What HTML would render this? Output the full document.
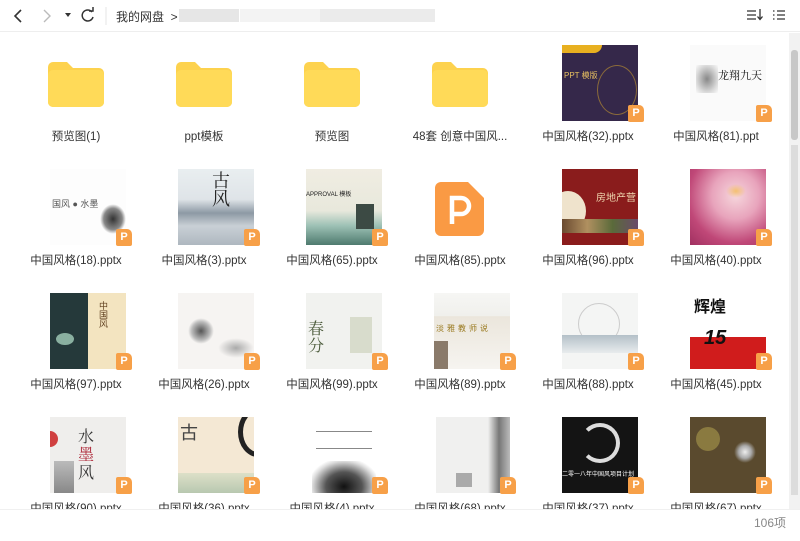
<!DOCTYPE html>
<html><head><meta charset="utf-8"><style>
*{margin:0;padding:0;box-sizing:border-box}
body{width:800px;height:533px;overflow:hidden;background:#fff;font-family:"Liberation Sans","Noto Sans CJK SC",sans-serif;color:#333;position:relative}
.top{position:absolute;left:0;top:0;width:800px;height:32px;border-bottom:1px solid #eee;background:#fff}
.cell{position:absolute;width:128px;height:124px}
.th{position:absolute;left:38px;top:0;width:76px;height:76px;overflow:hidden}
.bd{position:absolute;left:104px;top:60px;width:16px;height:17px;background:#f7a048;border-radius:2px 5px 2px 2px;color:#fff;font-size:11px;font-weight:bold;text-align:center;line-height:17px}
.lb{position:absolute;left:0;top:83px;width:128px;text-align:center;font-size:11.5px;color:#333;white-space:nowrap}
.fold{position:absolute;left:36px;top:16px;width:56px;height:46px}
.foot{position:absolute;left:0;top:509px;width:800px;height:24px;background:#fff;border-top:1px solid #f0f0f0}
</style></head><body>

<div class="top">
<svg width="800" height="32" style="position:absolute;left:0;top:0">
<path d="M21 10 L15 16 L21 22" stroke="#333" stroke-width="1.6" fill="none"/>
<path d="M44 10 L50 16 L44 22" stroke="#bbb" stroke-width="1.4" fill="none"/>
<path d="M65 13 L71 13 L68 17Z" fill="#333"/>
<path d="M92 12 A5.5 5.5 0 1 0 93 17" stroke="#333" stroke-width="1.5" fill="none"/>
<path d="M89 11 L93 11 L93 7" stroke="#333" stroke-width="1.5" fill="none"/>
<line x1="106" y1="7" x2="106" y2="25" stroke="#e5e5e5"/>
<rect x="179" y="9" width="60" height="13" fill="#e6e6e6"/>
<rect x="240" y="9" width="80" height="13" fill="#f3f3f3"/>
<rect x="320" y="9" width="115" height="13" fill="#ebebeb"/>
<path d="M747 11h9M747 15h9M747 19h9" stroke="#333" stroke-width="1.3"/>
<path d="M760 9v10M757.5 16.5 L760 19.5 L762.5 16.5" stroke="#333" stroke-width="1.3" fill="none"/>
<path d="M773 11h1.5M773 15h1.5M773 19h1.5M777 11h8M777 15h8M777 19h8" stroke="#333" stroke-width="1.3"/>
</svg>
<div style="position:absolute;left:116px;top:8px;font-size:12px;color:#333">我的网盘&nbsp; &gt;</div>
</div>

<!-- scrollbar -->
<div style="position:absolute;left:789px;top:33px;width:11px;height:476px;background:#f2f2f2"></div>
<div style="position:absolute;left:791px;top:50px;width:7px;height:90px;background:#c8c8c8;border-radius:3px"></div>
<div style="position:absolute;left:791px;top:145px;width:7px;height:350px;background:#dcdcdc"></div>

<!-- Row 1 -->
<div class="cell" style="left:12px;top:45px"><svg class="fold" viewBox="0 0 56 46"><path d="M0 6a5 5 0 0 1 5-5h14l6 6h26a5 5 0 0 1 5 5v29a5 5 0 0 1-5 5H5a5 5 0 0 1-5-5z" fill="#fdd24e"/><path d="M0 14a5 5 0 0 1 5-5h46a5 5 0 0 1 5 5v27a5 5 0 0 1-5 5H5a5 5 0 0 1-5-5z" fill="#ffda58"/></svg><div class="lb">预览图(1)</div></div>
<div class="cell" style="left:140px;top:45px"><svg class="fold" viewBox="0 0 56 46"><path d="M0 6a5 5 0 0 1 5-5h14l6 6h26a5 5 0 0 1 5 5v29a5 5 0 0 1-5 5H5a5 5 0 0 1-5-5z" fill="#fdd24e"/><path d="M0 14a5 5 0 0 1 5-5h46a5 5 0 0 1 5 5v27a5 5 0 0 1-5 5H5a5 5 0 0 1-5-5z" fill="#ffda58"/></svg><div class="lb">ppt模板</div></div>
<div class="cell" style="left:268px;top:45px"><svg class="fold" viewBox="0 0 56 46"><path d="M0 6a5 5 0 0 1 5-5h14l6 6h26a5 5 0 0 1 5 5v29a5 5 0 0 1-5 5H5a5 5 0 0 1-5-5z" fill="#fdd24e"/><path d="M0 14a5 5 0 0 1 5-5h46a5 5 0 0 1 5 5v27a5 5 0 0 1-5 5H5a5 5 0 0 1-5-5z" fill="#ffda58"/></svg><div class="lb">预览图</div></div>
<div class="cell" style="left:396px;top:45px"><svg class="fold" viewBox="0 0 56 46"><path d="M0 6a5 5 0 0 1 5-5h14l6 6h26a5 5 0 0 1 5 5v29a5 5 0 0 1-5 5H5a5 5 0 0 1-5-5z" fill="#fdd24e"/><path d="M0 14a5 5 0 0 1 5-5h46a5 5 0 0 1 5 5v27a5 5 0 0 1-5 5H5a5 5 0 0 1-5-5z" fill="#ffda58"/></svg><div class="lb">48套 创意中国风...</div></div>
<div class="cell" style="left:524px;top:45px"><div class="th" style="background:#35284a"><div style="position:absolute;left:0;top:0;width:40px;height:8px;background:#e8b020;border-radius:0 0 10px 0"></div><div style="position:absolute;left:2px;top:25px;color:#e8c060;font-size:8px">PPT 模版</div><div style="position:absolute;left:35px;top:20px;width:40px;height:50px;border-radius:50%;border:1px solid #8a6a3a"></div></div><div class="bd">P</div><div class="lb">中国风格(32).pptx</div></div>
<div class="cell" style="left:652px;top:45px"><div class="th" style="background:#fafafa"><div style="position:absolute;left:6px;top:20px;width:22px;height:28px;background:radial-gradient(#888,#ddd 70%,transparent)"></div><div style="position:absolute;left:28px;top:22px;font-size:11px;color:#111;font-family:'Noto Serif CJK SC',serif">龙翔九天</div></div><div class="bd">P</div><div class="lb">中国风格(81).ppt</div></div>

<!-- Row 2 -->
<div class="cell" style="left:12px;top:169px"><div class="th" style="background:#fdfdfd"><div style="position:absolute;left:2px;top:28px;font-size:9px;color:#555">国风 ● 水墨</div><div style="position:absolute;left:50px;top:35px;width:26px;height:30px;background:radial-gradient(#333,#888 50%,transparent 70%)"></div></div><div class="bd">P</div><div class="lb">中国风格(18).pptx</div></div>
<div class="cell" style="left:140px;top:169px"><div class="th" style="background:linear-gradient(#e9eef0 0,#dfe4e8 40%,#8d99a4 58%,#c9d0d6 75%,#aeb7bf 100%)"><div style="position:absolute;left:34px;top:2px;font-size:18px;color:#222;font-family:'Noto Serif CJK SC',serif;line-height:18px">古<br>风</div></div><div class="bd">P</div><div class="lb">中国风格(3).pptx</div></div>
<div class="cell" style="left:268px;top:169px"><div class="th" style="background:linear-gradient(#f0ede2 0,#e8e8dc 55%,#9cc0b4 75%,#4e7a6e 100%)"><div style="position:absolute;left:0;top:20px;font-size:6px;color:#222">APPROVAL 模板</div><div style="position:absolute;left:50px;top:35px;width:18px;height:25px;background:#3c4a44"></div></div><div class="bd">P</div><div class="lb">中国风格(65).pptx</div></div>
<div class="cell" style="left:396px;top:169px"><svg style="position:absolute;left:39px;top:13px" width="49" height="54" viewBox="0 0 49 54"><path d="M6 0h27l16 16v32a6 6 0 0 1-6 6H6a6 6 0 0 1-6-6V6a6 6 0 0 1 6-6z" fill="#fa9a44"/><path d="M17 42V16h9a8 8 0 0 1 0 16h-9" stroke="#fff" stroke-width="4.5" fill="none"/></svg><div class="lb">中国风格(85).pptx</div></div>
<div class="cell" style="left:524px;top:169px"><div class="th" style="background:#8a1c1c"><div style="position:absolute;left:-12px;top:22px;width:36px;height:40px;border-radius:50%;background:#efe3cc"></div><div style="position:absolute;left:34px;top:20px;font-size:10px;color:#f0d8b0">房地产营</div><div style="position:absolute;left:0;top:50px;width:76px;height:14px;background:linear-gradient(90deg,#6a4a30,#b09060,#5a6a3a,#6a4a6a)"></div></div><div class="bd">P</div><div class="lb">中国风格(96).pptx</div></div>
<div class="cell" style="left:652px;top:169px"><div class="th" style="background:radial-gradient(circle at 60% 35%,#f6d6dc 0,#e8a4bc 35%,#c04878 70%,#a03060 100%)"><div style="position:absolute;left:36px;top:15px;width:20px;height:14px;background:radial-gradient(#f4c070,transparent 70%)"></div></div><div class="bd">P</div><div class="lb">中国风格(40).pptx</div></div>

<!-- Row 3 -->
<div class="cell" style="left:12px;top:293px"><div class="th" style="background:linear-gradient(90deg,#25393a 0,#25393a 50%,#f3e4c0 50%)"><div style="position:absolute;left:48px;top:8px;font-size:9px;color:#604020;line-height:10px;writing-mode:vertical-rl">中国风</div><div style="position:absolute;left:6px;top:40px;width:18px;height:12px;background:#8ab0a0;border-radius:50%"></div></div><div class="bd">P</div><div class="lb">中国风格(97).pptx</div></div>
<div class="cell" style="left:140px;top:293px"><div class="th" style="background:#f6f4f2"><div style="position:absolute;left:10px;top:25px;width:26px;height:26px;background:radial-gradient(#555,#bbb 50%,transparent 70%)"></div><div style="position:absolute;left:40px;top:45px;width:36px;height:20px;background:radial-gradient(#aaa,transparent 70%)"></div></div><div class="bd">P</div><div class="lb">中国风格(26).pptx</div></div>
<div class="cell" style="left:268px;top:293px"><div class="th" style="background:#f1f2ef"><div style="position:absolute;left:2px;top:26px;font-size:16px;color:#4a5a3a;font-family:'Noto Serif CJK SC',serif;line-height:17px">春<br>分</div><div style="position:absolute;left:44px;top:24px;width:22px;height:36px;background:#d8dccc"></div></div><div class="bd">P</div><div class="lb">中国风格(99).pptx</div></div>
<div class="cell" style="left:396px;top:293px"><div class="th" style="background:linear-gradient(#f6f6f4 0,#f0f0ec 30%,#ebe6dc 31%,#f6f4f0 100%)"><div style="position:absolute;left:2px;top:30px;font-size:8px;color:#9a7a20;letter-spacing:3px">淡雅教师说</div><div style="position:absolute;left:0;top:48px;width:14px;height:28px;background:#8a7a6a"></div></div><div class="bd">P</div><div class="lb">中国风格(89).pptx</div></div>
<div class="cell" style="left:524px;top:293px"><div class="th" style="background:#f4f5f4"><div style="position:absolute;left:16px;top:10px;width:42px;height:42px;border-radius:50%;border:1px solid #ccc"></div><div style="position:absolute;left:0;top:42px;width:76px;height:18px;background:linear-gradient(#b4c0c8,#e8eced)"></div></div><div class="bd">P</div><div class="lb">中国风格(88).pptx</div></div>
<div class="cell" style="left:652px;top:293px"><div class="th" style="background:#fff"><div style="position:absolute;left:4px;top:0;font-size:16px;color:#111;font-weight:bold">辉煌</div><div style="position:absolute;left:0;top:44px;width:76px;height:32px;background:#d01c1c"></div><div style="position:absolute;left:14px;top:34px;font-size:20px;color:#111;font-weight:bold;font-style:italic">15</div></div><div class="bd">P</div><div class="lb">中国风格(45).pptx</div></div>

<!-- Row 4 -->
<div class="cell" style="left:12px;top:417px"><div class="th" style="background:#efeeec"><div style="position:absolute;left:-8px;top:14px;width:16px;height:16px;border-radius:50%;background:#d04040"></div><div style="position:absolute;left:28px;top:10px;font-size:16px;color:#333;line-height:18px;font-family:'Noto Serif CJK SC',serif">水<br><span style="color:#b03040">墨</span><br>风</div><div style="position:absolute;left:4px;top:44px;width:20px;height:32px;background:linear-gradient(#bbb,#888)"></div></div><div class="bd">P</div><div class="lb">中国风格(90).pptx</div></div>
<div class="cell" style="left:140px;top:417px"><div class="th" style="background:#f4e8d4"><div style="position:absolute;left:2px;top:2px;font-size:18px;color:#444">古</div><div style="position:absolute;left:60px;top:-10px;width:40px;height:50px;border-radius:50%;border:5px solid #222"></div><div style="position:absolute;left:0;top:56px;width:76px;height:20px;background:linear-gradient(#dde0c8,#b8c8b0)"></div></div><div class="bd">P</div><div class="lb">中国风格(36).pptx</div></div>
<div class="cell" style="left:268px;top:417px"><div class="th" style="background:#fff"><div style="position:absolute;left:10px;top:14px;width:56px;height:18px;border-top:1px solid #888;border-bottom:1px solid #888"></div><div style="position:absolute;left:6px;top:44px;width:64px;height:32px;background:radial-gradient(ellipse at 50% 80%,#111,#555 40%,#ddd 70%,transparent 80%)"></div></div><div class="bd">P</div><div class="lb">中国风格(4).pptx</div></div>
<div class="cell" style="left:396px;top:417px"><div class="th" style="background:#f0f0ef;left:40px;width:74px"><div style="position:absolute;left:52px;top:0;width:22px;height:76px;background:linear-gradient(90deg,transparent,#777 50%,#bbb)"></div><div style="position:absolute;left:20px;top:56px;width:16px;height:14px;background:#aaa"></div></div><div class="bd">P</div><div class="lb">中国风格(68).pptx</div></div>
<div class="cell" style="left:524px;top:417px"><div class="th" style="background:#141414"><div style="position:absolute;left:18px;top:6px;width:40px;height:40px;border-radius:50%;border:4px solid #ddd;border-left-color:transparent"></div><div style="position:absolute;left:0;top:52px;font-size:6px;color:#fff;white-space:nowrap">二零一八年中国风项目计划</div></div><div class="bd">P</div><div class="lb">中国风格(37).pptx</div></div>
<div class="cell" style="left:652px;top:417px"><div class="th" style="background:#5a4a2e"><div style="position:absolute;left:6px;top:10px;width:24px;height:24px;border-radius:50%;background:#8a7a40"></div><div style="position:absolute;left:44px;top:24px;width:22px;height:22px;border-radius:50%;background:radial-gradient(#eee,#aaa 40%,transparent 70%)"></div></div><div class="bd">P</div><div class="lb">中国风格(67).pptx</div></div>

<div class="foot"><div style="position:absolute;right:14px;top:4px;font-size:12px;color:#888">106项</div></div>
</body></html>
